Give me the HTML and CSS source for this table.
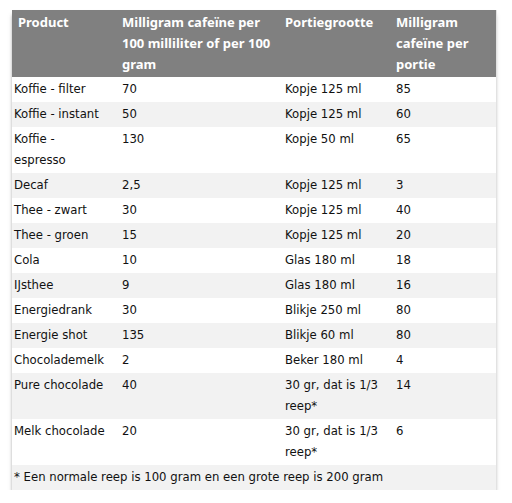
FILE: index.html
```html
<!DOCTYPE html>
<html>
<head>
<meta charset="utf-8">
<link rel="stylesheet" href="styles.css">
</head>
<body>
<table class="caf">
  <colgroup>
    <col class="c1"><col class="c2"><col class="c3"><col class="c4">
  </colgroup>
  <thead>
    <tr>
      <th class="first">Product</th>
      <th>Milligram cafeïne per 100 milliliter of per 100 gram</th>
      <th>Portiegrootte</th>
      <th>Milligram cafeïne per portie</th>
    </tr>
  </thead>
  <tbody>
    <tr><td>Koffie - filter</td><td>70</td><td>Kopje 125 ml</td><td>85</td></tr>
    <tr><td>Koffie - instant</td><td>50</td><td>Kopje 125 ml</td><td>60</td></tr>
    <tr><td>Koffie - espresso</td><td>130</td><td>Kopje 50 ml</td><td>65</td></tr>
    <tr><td>Decaf</td><td>2,5</td><td>Kopje 125 ml</td><td>3</td></tr>
    <tr><td>Thee - zwart</td><td>30</td><td>Kopje 125 ml</td><td>40</td></tr>
    <tr><td>Thee - groen</td><td>15</td><td>Kopje 125 ml</td><td>20</td></tr>
    <tr><td>Cola</td><td>10</td><td>Glas 180 ml</td><td>18</td></tr>
    <tr><td>IJsthee</td><td>9</td><td>Glas 180 ml</td><td>16</td></tr>
    <tr><td>Energiedrank</td><td>30</td><td>Blikje 250 ml</td><td>80</td></tr>
    <tr><td>Energie shot</td><td>135</td><td>Blikje 60 ml</td><td>80</td></tr>
    <tr><td>Chocolademelk</td><td>2</td><td>Beker 180 ml</td><td>4</td></tr>
    <tr><td>Pure chocolade</td><td>40</td><td>30 gr, dat is 1/3 reep*</td><td>14</td></tr>
    <tr><td>Melk chocolade</td><td>20</td><td>30 gr, dat is 1/3 reep*</td><td>6</td></tr>
    <tr><td colspan="4">* Een normale reep is 100 gram en een grote reep is 200 gram</td></tr>
  </tbody>
</table>
</body>
</html>
```
FILE: styles.css
```css
html, body {
  margin: 0;
  padding: 0;
  background: #ffffff;
}
body {
  padding: 10px 0 0 12px;
  font-family: "DejaVu Sans", Verdana, sans-serif;
  font-size: 11.7px;
  color: #111111;
}
.caf {
  border-collapse: collapse;
  table-layout: fixed;
  width: 484px;
  box-shadow: 1px 0 0 #e2e2e2, 0 4px 4px -1px rgba(0, 0, 0, 0.55);
}
.c1 { width: 108px; }
.c2 { width: 163px; }
.c3 { width: 111px; }
.c4 { width: 102px; }
.caf th, .caf td {
  padding: 2px 12px 2px 2px;
  line-height: 21px;
  text-align: left;
  vertical-align: top;
}
.caf th {
  background: #808080;
  color: #ffffff;
  font-family: "Noto Sans", "DejaVu Sans", sans-serif;
  font-size: 13px;
  font-weight: bold;
}
.caf th.first {
  padding-left: 6px;
}
.caf tbody tr:nth-child(odd) td { background: #ffffff; }
.caf tbody tr:nth-child(even) td { background: #f2f2f2; }
```
